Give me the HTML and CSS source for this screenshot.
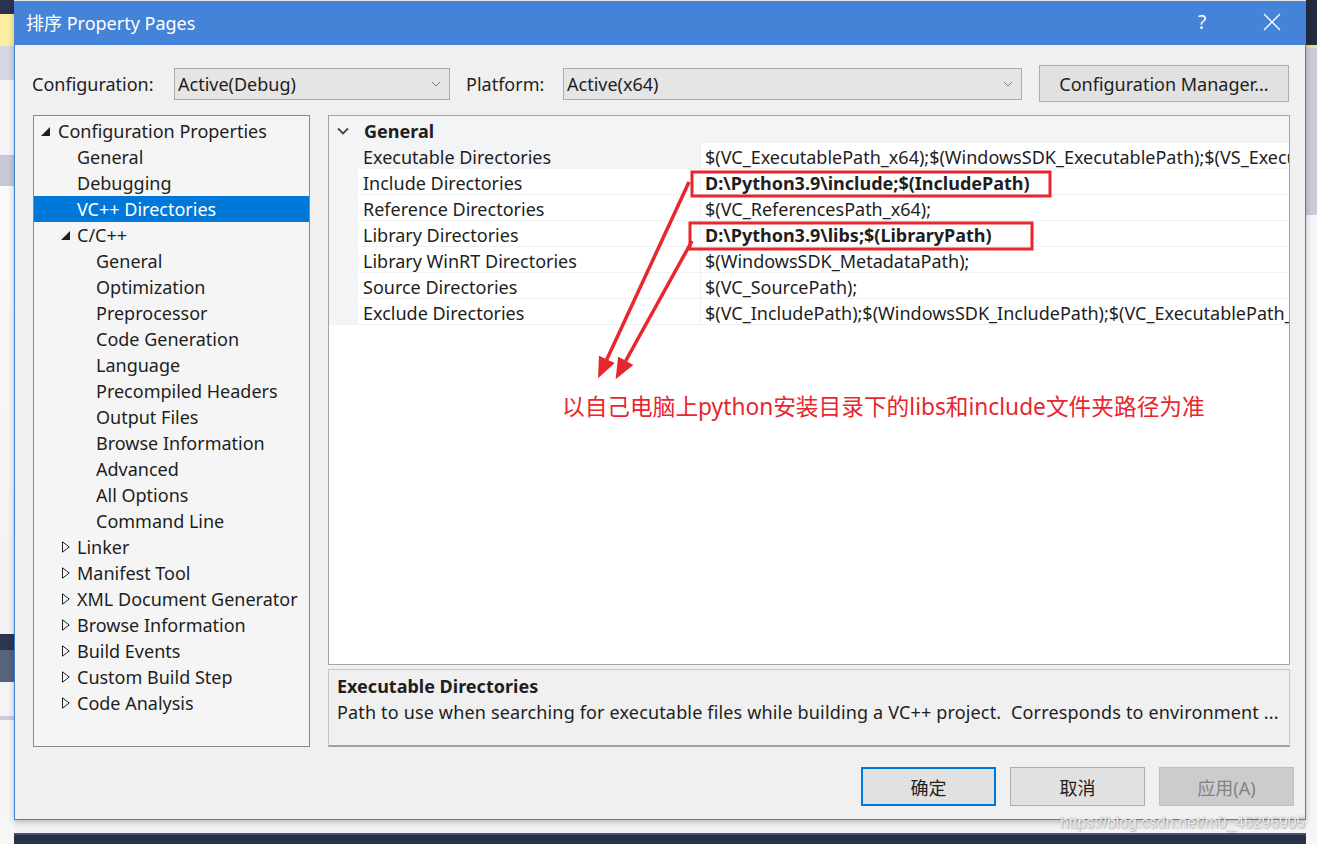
FILE: index.html
```html
<!DOCTYPE html>
<html lang="zh-CN">
<head>
    <meta charset="UTF-8">
    <link rel="stylesheet" href="styles.css">
    <title>排序 Property Pages</title>
</head>
<body>
<div class="screen">
    <div class="dialog">
        <div class="titlebar">
            <span class="title">排序 Property Pages</span>
            <span class="help">?</span>
            <span class="close">
                <svg width="18" height="18" viewBox="0 0 18 18"><path d="M1 1 L17 17 M17 1 L1 17" stroke="#fff" stroke-width="1.3"/></svg>
            </span>
        </div>

        <div class="body">
            <div class="config-row">
                <span class="cfg-label">Configuration:</span>
                <div class="combo combo-cfg">
                    <span>Active(Debug)</span>
                    <svg width="10" height="6" viewBox="0 0 10 6"><path d="M1 1 L5 5 L9 1" fill="none" stroke="#7a7a7a" stroke-width="1"/></svg>
                </div>
                <span class="cfg-label plat">Platform:</span>
                <div class="combo combo-plat">
                    <span>Active(x64)</span>
                    <svg width="10" height="6" viewBox="0 0 10 6"><path d="M1 1 L5 5 L9 1" fill="none" stroke="#7a7a7a" stroke-width="1"/></svg>
                </div>
                <button class="btn btn-mgr">Configuration Manager...</button>
            </div>

            <div class="main">
                <div class="tree">
                    <div class="node lvl0"><span class="exp"><svg width="9" height="9" viewBox="0 0 9 9"><path d="M9 0 L9 9 L0 9 Z" fill="#1e1e1e"/></svg></span>Configuration Properties</div>
                    <div class="node lvl1"><span class="exp"></span>General</div>
                    <div class="node lvl1"><span class="exp"></span>Debugging</div>
                    <div class="node lvl1 selected"><span class="exp"></span>VC++ Directories</div>
                    <div class="node lvl1"><span class="exp open"><svg width="9" height="9" viewBox="0 0 9 9"><path d="M9 0 L9 9 L0 9 Z" fill="#1e1e1e"/></svg></span>C/C++</div>
                    <div class="node lvl2"><span class="exp"></span>General</div>
                    <div class="node lvl2"><span class="exp"></span>Optimization</div>
                    <div class="node lvl2"><span class="exp"></span>Preprocessor</div>
                    <div class="node lvl2"><span class="exp"></span>Code Generation</div>
                    <div class="node lvl2"><span class="exp"></span>Language</div>
                    <div class="node lvl2"><span class="exp"></span>Precompiled Headers</div>
                    <div class="node lvl2"><span class="exp"></span>Output Files</div>
                    <div class="node lvl2"><span class="exp"></span>Browse Information</div>
                    <div class="node lvl2"><span class="exp"></span>Advanced</div>
                    <div class="node lvl2"><span class="exp"></span>All Options</div>
                    <div class="node lvl2"><span class="exp"></span>Command Line</div>
                    <div class="node lvl1"><span class="exp shut"><svg width="8" height="12" viewBox="0 0 8 12"><path d="M0.5 0.8 L7.2 6 L0.5 11.2 Z" fill="none" stroke="#1e1e1e" stroke-width="1"/></svg></span>Linker</div>
                    <div class="node lvl1"><span class="exp shut"><svg width="8" height="12" viewBox="0 0 8 12"><path d="M0.5 0.8 L7.2 6 L0.5 11.2 Z" fill="none" stroke="#1e1e1e" stroke-width="1"/></svg></span>Manifest Tool</div>
                    <div class="node lvl1"><span class="exp shut"><svg width="8" height="12" viewBox="0 0 8 12"><path d="M0.5 0.8 L7.2 6 L0.5 11.2 Z" fill="none" stroke="#1e1e1e" stroke-width="1"/></svg></span>XML Document Generator</div>
                    <div class="node lvl1"><span class="exp shut"><svg width="8" height="12" viewBox="0 0 8 12"><path d="M0.5 0.8 L7.2 6 L0.5 11.2 Z" fill="none" stroke="#1e1e1e" stroke-width="1"/></svg></span>Browse Information</div>
                    <div class="node lvl1"><span class="exp shut"><svg width="8" height="12" viewBox="0 0 8 12"><path d="M0.5 0.8 L7.2 6 L0.5 11.2 Z" fill="none" stroke="#1e1e1e" stroke-width="1"/></svg></span>Build Events</div>
                    <div class="node lvl1"><span class="exp shut"><svg width="8" height="12" viewBox="0 0 8 12"><path d="M0.5 0.8 L7.2 6 L0.5 11.2 Z" fill="none" stroke="#1e1e1e" stroke-width="1"/></svg></span>Custom Build Step</div>
                    <div class="node lvl1"><span class="exp shut"><svg width="8" height="12" viewBox="0 0 8 12"><path d="M0.5 0.8 L7.2 6 L0.5 11.2 Z" fill="none" stroke="#1e1e1e" stroke-width="1"/></svg></span>Code Analysis</div>
                </div>

                <div class="right-col">
                    <div class="grid">
                        <div class="grid-head">
                            <span class="gutter-icon"><svg width="12" height="8" viewBox="0 0 12 8"><path d="M1 1.5 L6 6.5 L11 1.5" fill="none" stroke="#444" stroke-width="1.8"/></svg></span>
                            <span class="group-name">General</span>
                        </div>
                        <div class="prop current"><span class="gutter"></span><span class="pname">Executable Directories</span><span class="pval">$(VC_ExecutablePath_x64);$(WindowsSDK_ExecutablePath);$(VS_ExecutablePath);$(MSBuild_ExecutablePath);$(FxCopDir);$(PATH);</span></div>
                        <div class="prop"><span class="gutter"></span><span class="pname">Include Directories</span><span class="pval bold">D:\Python3.9\include;$(IncludePath)</span></div>
                        <div class="prop"><span class="gutter"></span><span class="pname">Reference Directories</span><span class="pval">$(VC_ReferencesPath_x64);</span></div>
                        <div class="prop"><span class="gutter"></span><span class="pname">Library Directories</span><span class="pval bold">D:\Python3.9\libs;$(LibraryPath)</span></div>
                        <div class="prop"><span class="gutter"></span><span class="pname">Library WinRT Directories</span><span class="pval">$(WindowsSDK_MetadataPath);</span></div>
                        <div class="prop"><span class="gutter"></span><span class="pname">Source Directories</span><span class="pval">$(VC_SourcePath);</span></div>
                        <div class="prop"><span class="gutter"></span><span class="pname">Exclude Directories</span><span class="pval">$(VC_IncludePath);$(WindowsSDK_IncludePath);$(VC_ExecutablePath_x64);$(VC_LibraryPath_x64);</span></div>
                    </div>
                    <div class="desc">
                        <div class="desc-title">Executable Directories</div>
                        <div class="desc-text">Path to use when searching for executable files while building a VC++ project.&nbsp; Corresponds to environment ...</div>
                    </div>
                </div>
            </div>

            <div class="footer">
                <button class="btn btn-ok">确定</button>
                <button class="btn">取消</button>
                <button class="btn btn-off">应用(A)</button>
            </div>
        </div>
    </div>

    <!-- red markup drawn on top of the dialog -->
    <svg class="markup" width="1317" height="844" viewBox="0 0 1317 844">
        <defs>
            <marker id="head" markerWidth="6" markerHeight="5" refX="4" refY="2.5" orient="auto" markerUnits="strokeWidth">
                <path d="M0 0 L6 2.5 L0 5 Z" fill="#e8262d"/>
            </marker>
        </defs>
        <rect x="692" y="172" width="358" height="24" fill="none" stroke="#e8262d" stroke-width="3"/>
        <rect x="690" y="223" width="342" height="26" fill="none" stroke="#e8262d" stroke-width="3"/>
        <line x1="689" y1="182" x2="601" y2="372" stroke="#e8262d" stroke-width="3.5" marker-end="url(#head)"/>
        <line x1="692" y1="241" x2="619" y2="373" stroke="#e8262d" stroke-width="3.5" marker-end="url(#head)"/>
    </svg>
    <div class="note">以自己电脑上python安装目录下的libs和include文件夹路径为准</div>
    <div class="watermark">https://blog.csdn.net/m0_46296905</div>
</div>
</body>
</html>
```

FILE: styles.css
```css
*{
    margin: 0;
    padding: 0;
    box-sizing: border-box;
}
body{
    width: 1317px;
    height: 844px;
    overflow: hidden;
    font-family: "Noto Sans", "Noto Sans CJK SC", sans-serif;
    color: #1e1e1e;
    background:
        linear-gradient(to bottom, #2a3450 0, #2a3450 14px, #fbeea2 14px, #fbeea2 46px, #d4d7e0 46px, #d4d7e0 80px, #f5f5f7 80px, #f5f5f7 155px, #c7cad6 155px, #c7cad6 186px, #fafafa 186px, #f2f2f4 634px, #2c3650 634px, #2c3650 650px, #56637d 650px, #56637d 682px, #f4f4f6 682px, #f4f4f6 716px, #c9ccd6 716px, #c9ccd6 720px, #f6f6f6 720px) left top / 14px 100% no-repeat,
        linear-gradient(to bottom, #232c44 0, #232c44 45px, #eadc92 45px, #eadc92 48px, #c9ccd8 48px, #c9ccd8 215px, #f6f6f8 215px) right top / 11px 100% no-repeat,
        linear-gradient(to bottom, #f2f2f2 0, #f2f2f2 833px, #4a5470 833px, #4a5470 835px, #283148 835px);
}
.screen{
    position: relative;
    width: 1317px;
    height: 844px;
    padding-top: 1px;
    padding-left: 14px;
}

/* dialog frame */
.dialog{
    width: 1292px;
    height: 819px;
    border: 1px solid #3f7fd4;
    background: #f0f0f0;
    box-shadow: 0 2px 6px rgba(0,0,0,0.25);
}
.titlebar{
    height: 44px;
    margin: -1px -1px 0 -1px;
    background: #4483d7;
    color: #fff;
    display: flex;
    align-items: center;
    padding-left: 12px;
    padding-bottom: 2px;
}
.title{
    font-size: 18px;
    flex: 1;
}
.help{
    font-size: 19px;
    width: 72px;
    text-align: center;
}
.close{
    width: 68px;
    height: 42px;
    display: flex;
    align-items: center;
    justify-content: center;
}

.body{
    padding: 20px 11px 14px 17px;
}
.config-row{
    height: 37px;
    display: flex;
    align-items: center;
    font-size: 18px;
}
.cfg-label{
    width: 142px;
}
.cfg-label.plat{
    width: 97px;
    margin-left: 16px;
}
.combo{
    height: 32px;
    background: #e5e5e5;
    border: 1px solid #adadad;
    display: flex;
    align-items: center;
    justify-content: space-between;
    padding: 0 8px 0 3px;
}
.combo svg{
    margin-top: 1px;
}
.combo-cfg{
    width: 276px;
}
.combo-plat{
    width: 459px;
}
.btn{
    font-family: "Noto Sans", "Noto Sans CJK SC", sans-serif;
    font-size: 18px;
    color: #1e1e1e;
    background: #e1e1e1;
    border: 1px solid #adadad;
    height: 39px;
    width: 135px;
}
.btn-mgr{
    width: 250px;
    height: 37px;
    margin-left: 17px;
}

.main{
    display: flex;
    gap: 18px;
    margin-top: 13px;
    margin-left: 1px;
    height: 632px;
}

/* left tree */
.tree{
    width: 277px;
    height: 632px;
    border: 1px solid #848891;
    background: #f5f5f5;
    padding-top: 2px;
    font-size: 18px;
}
.node{
    height: 26px;
    display: flex;
    align-items: center;
    white-space: nowrap;
}
.exp{
    width: 19px;
    height: 26px;
    display: flex;
    align-items: center;
    padding-left: 2px;
}
.exp.open{
    padding-left: 3px;
}
.exp.shut{
    padding-left: 4px;
}
.lvl0{ padding-left: 5px; }
.lvl1{ padding-left: 24px; }
.lvl2{ padding-left: 43px; }
.node.selected{
    background: #0078d7;
    color: #fff;
}

/* right column: property grid + description */
.right-col{
    display: flex;
    flex-direction: column;
    gap: 4px;
    width: 962px;
}
.grid{
    height: 551px;
    border: 1px solid #a3a3a3;
    background: #fff;
    font-size: 18px;
    overflow: hidden;
}
.grid-head{
    height: 27px;
    background: #f3f4f5;
    display: flex;
    align-items: center;
    padding-top: 3px;
}
.gutter-icon{
    width: 29px;
    padding-left: 8px;
    display: flex;
    align-items: center;
}
.group-name{
    font-weight: bold;
    padding-left: 6px;
}
.prop{
    height: 26px;
    display: flex;
    white-space: nowrap;
}
.gutter{
    width: 29px;
    flex: none;
    background: #f3f4f5;
}
.pname{
    width: 343px;
    flex: none;
    padding-left: 5px;
    padding-top: 3px;
    line-height: 22px;
    border-bottom: 1px solid #f0f0f0;
    border-right: 1px solid #f0f0f0;
}
.pval{
    flex: 1;
    padding-left: 4px;
    padding-top: 3px;
    line-height: 22px;
    overflow: hidden;
    border-bottom: 1px solid #f0f0f0;
}
.pval.bold{
    font-weight: bold;
}
.prop.current .pname{
    background: #f3f4f5;
}

.desc{
    height: 78px;
    border: 1px solid #c4c4c4;
    border-bottom: 2px solid #a0a0a0;
    background: #f0f0f0;
    padding: 3px 8px;
    font-size: 18px;
    white-space: nowrap;
    overflow: hidden;
}
.desc-title{
    font-weight: bold;
    line-height: 26px;
}
.desc-text{
    line-height: 26px;
    letter-spacing: 0.16px;
}

.footer{
    display: flex;
    justify-content: flex-end;
    gap: 14px;
    margin-top: 20px;
}
.btn-ok{
    border: 2px solid #0078d7;
}
.btn-off{
    background: #cccccc;
    border-color: #bfbfbf;
    color: #838383;
}

/* overlays */
.markup{
    position: absolute;
    left: 0;
    top: 0;
    pointer-events: none;
}
.note{
    position: absolute;
    left: 562px;
    top: 389px;
    font-size: 22.7px;
    color: #e8262d;
    white-space: nowrap;
}
.watermark{
    position: absolute;
    left: 1060px;
    top: 814px;
    font-family: "Liberation Sans", sans-serif;
    font-size: 15.7px;
    color: rgba(255,255,255,0.8);
    text-shadow: 0 0 1px #9a9a9a, 1px 1px 1px rgba(0,0,0,0.2);
}
```
